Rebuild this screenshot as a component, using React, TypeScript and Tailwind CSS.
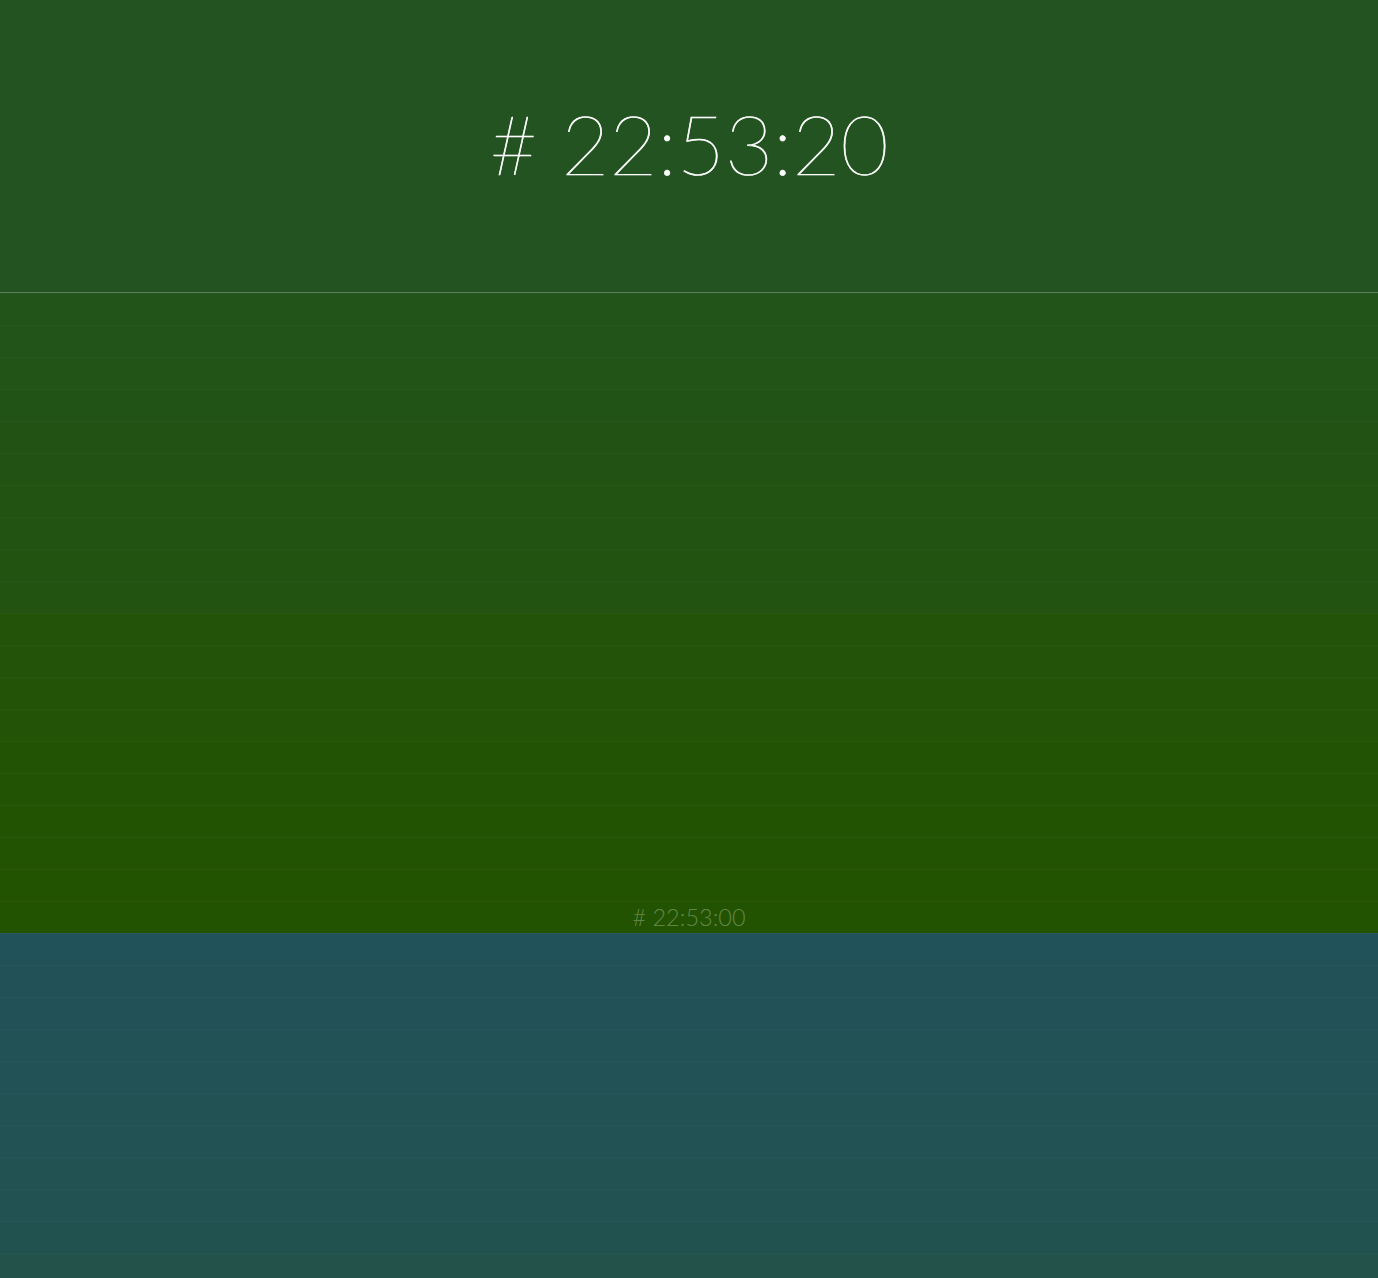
import React from 'react'

const pad = (n: number) => n.toString().padStart(2, '0')

interface MinuteBlockProps {
  hour: number
  minute: number
  fromSecond: number
  toSecond?: number
}

const MinuteBlock: React.FC<MinuteBlockProps> = ({ hour, minute, fromSecond, toSecond = 0 }) => {
  const seconds = Array.from({ length: fromSecond - toSecond + 1 }, (_, i) => fromSecond - i)
  return (
    <section>
      {seconds.map((s) => {
        const hex = `#${pad(hour)}${pad(minute)}${pad(s)}`
        return (
          <div
            key={s}
            className="h-8 border-t border-white/[0.03] flex items-end justify-center"
            style={{ backgroundColor: hex }}
          >
            {s === 0 && (
              <span className="text-[23.5px] font-light leading-none pb-[4px] text-white/30 font-['Lato',sans-serif]">
                # {pad(hour)}:{pad(minute)}:{pad(second(s))}
              </span>
            )}
          </div>
        )
      })}
    </section>
  )
}

const second = (s: number) => s

export default function App() {
  const hour = 22
  const minute = 53
  const sec = 20
  const current = `#${pad(hour)}${pad(minute)}${pad(sec)}`

  return (
    <div className="h-[1278px] w-full overflow-hidden font-['Lato',sans-serif]">
      <header
        className="h-[293px] flex items-center justify-center border-b border-white/25"
        style={{ backgroundColor: current }}
      >
        <h1 className="text-[83px] font-thin leading-none text-white mb-[6px] [-webkit-text-stroke:0.7px_white]">
          # {pad(hour)}:{pad(minute)}:{pad(sec)}
        </h1>
      </header>
      <MinuteBlock hour={hour} minute={minute} fromSecond={sec - 1} />
      <MinuteBlock hour={hour} minute={minute - 1} fromSecond={59} toSecond={49} />
    </div>
  )
}
